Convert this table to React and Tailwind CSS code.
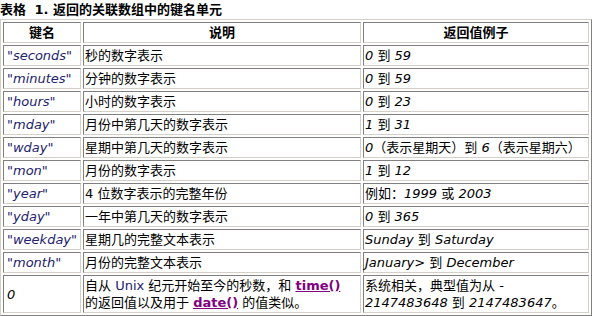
const font = "font-['DejaVu_Sans','Noto_Sans_CJK_SC',sans-serif]";
const cell =
  "border border-solid border-t-[#808080] border-l-[#808080] border-r-[#d4d0c8] border-b-[#d4d0c8] p-px h-[21px] align-middle";

const I = ({ children }) => <i>{children}</i>;
const Key = ({ children }) => <i className="text-[#22226e]">{children}</i>;
const Link = ({ children }) => (
  <a href="#" className="font-bold underline text-[#800080]">
    {children}
  </a>
);

const rows = [
  ['"seconds"', "秒的数字表示", <><I>0</I> 到 <I>59</I></>],
  ['"minutes"', "分钟的数字表示", <><I>0</I> 到 <I>59</I></>],
  ['"hours"', "小时的数字表示", <><I>0</I> 到 <I>23</I></>],
  ['"mday"', "月份中第几天的数字表示", <><I>1</I> 到 <I>31</I></>],
  ['"wday"', "星期中第几天的数字表示", <><I>0</I>（表示星期天）到 <I>6</I>（表示星期六）</>],
  ['"mon"', "月份的数字表示", <><I>1</I> 到 <I>12</I></>],
  ['"year"', "4 位数字表示的完整年份", <>例如：<I>1999</I> 或 <I>2003</I></>],
  ['"yday"', "一年中第几天的数字表示", <><I>0</I> 到 <I>365</I></>],
  ['"weekday"', "星期几的完整文本表示", <><I>Sunday</I> 到 <I>Saturday</I></>],
  ['"month"', "月份的完整文本表示", <><I>January&gt;</I> 到 <I>December</I></>],
];

export default function App() {
  return (
    <div className={`${font} text-[13px] text-black bg-white w-[592px] h-[316px] overflow-hidden`}>
      <div className="h-[19px] leading-[19px] font-bold">
        表格 <span className="ml-[4px]">1.</span> 返回的关联数组中的键名单元
      </div>
      <table className="table-fixed w-[592px] border-separate border-spacing-[2px] border border-solid border-t-[#d4d0c8] border-l-[#d4d0c8] border-r-[#808080] border-b-[#808080] leading-[17px]">
        <thead>
          <tr>
            <th className={`${cell} w-[78px] text-center font-bold`}>键名</th>
            <th className={`${cell} w-[278px] text-center font-bold`}>说明</th>
            <th className={`${cell} w-[226px] text-center font-bold`}>返回值例子</th>
          </tr>
        </thead>
        <tbody>
          {rows.map(([k, d, v]) => (
            <tr key={k}>
              <td className={`${cell} pl-[3px]`}>
                <Key>{k}</Key>
              </td>
              <td className={cell}>{d}</td>
              <td className={cell}>{v}</td>
            </tr>
          ))}
          <tr>
            <td className={`${cell} pl-[3px]`}>
              <I>0</I>
            </td>
            <td className={cell}>
              自从 <span className="text-[#22226e]">Unix</span> 纪元开始至今的秒数，和 <Link>time()</Link>
              <br />
              的返回值以及用于 <Link>date()</Link> 的值类似。
            </td>
            <td className={cell}>
              系统相关，典型值为从 -
              <br />
              <I>2147483648</I> 到 <I>2147483647</I>。
            </td>
          </tr>
        </tbody>
      </table>
    </div>
  );
}
